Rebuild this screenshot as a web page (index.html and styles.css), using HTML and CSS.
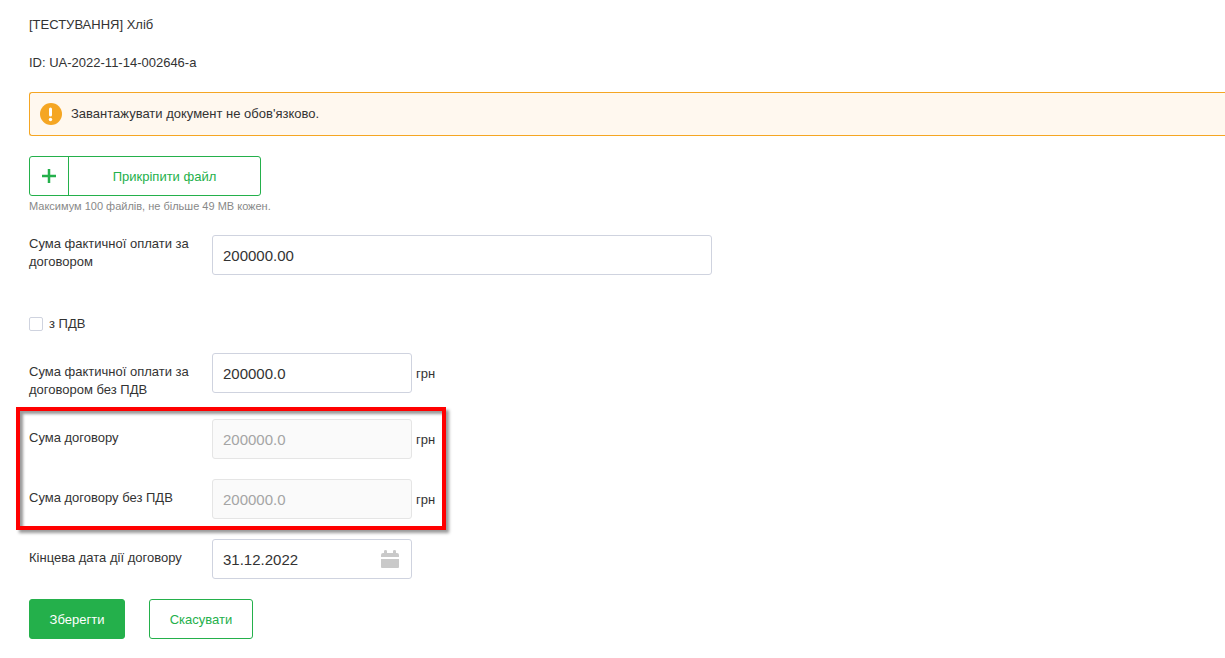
FILE: index.html
```html
<!DOCTYPE html>
<html lang="uk">
<head>
  <meta charset="UTF-8" />
  <meta name="viewport" content="width=device-width, initial-scale=1" />
  <title>[ТЕСТУВАННЯ] Хліб</title>
  <link rel="stylesheet" href="styles.css">
</head>
<body>
  <form class="contract">
    <p class="title">[ТЕСТУВАННЯ] Хліб</p>
    <p class="tender-id">ID: UA-2022-11-14-002646-a</p>

    <div class="alert">
      <svg class="alert-icon" viewBox="0 0 22 22" aria-hidden="true">
        <circle cx="11" cy="11" r="11" fill="#f5a623" />
        <path d="M10.500 6v6" stroke="#fff" stroke-width="3" stroke-linecap="round" />
        <circle cx="10.500" cy="16.500" r="1.700" fill="#fff" />
      </svg>
      <span>Завантажувати документ не обов'язково.</span>
    </div>

    <button type="button" class="attach">
      <span class="attach-plus">
        <svg viewBox="0 0 14 14" aria-hidden="true"><path d="M7 0v14M0 7h14" stroke="#24b04b" stroke-width="2.500" /></svg>
      </span>
      <span class="attach-text">Прикріпити файл</span>
    </button>
    <p class="hint">Максимум 100 файлів, не більше 49 MB кожен.</p>

    <div class="row row-paid">
      <label for="paid">Сума фактичної оплати за договором</label>
      <input type="text" id="paid" class="wide" value="200000.00" />
    </div>

    <div class="check">
      <input type="checkbox" id="vat" />
      <label for="vat">з ПДВ</label>
    </div>

    <div class="row">
      <label for="paid-novat">Сума фактичної оплати за договором без ПДВ</label>
      <input type="text" id="paid-novat" value="200000.0" />
      <span class="unit">грн</span>
    </div>

    <div class="marked">
      <div class="row">
        <label for="sum">Сума договору</label>
        <input type="text" id="sum" value="200000.0" disabled />
        <span class="unit">грн</span>
      </div>
      <div class="row">
        <label for="sum-novat">Сума договору без ПДВ</label>
        <input type="text" id="sum-novat" value="200000.0" disabled />
        <span class="unit">грн</span>
      </div>
    </div>

    <div class="row">
      <label for="end-date">Кінцева дата дії договору</label>
      <div class="date">
        <input type="text" id="end-date" value="31.12.2022" />
        <svg class="calendar" viewBox="0 0 18 18" fill="#c9c9c9" aria-hidden="true">
          <path d="M0 7V5q0-2 2-2h1V1q0-1 1.500-1T6 1v2h6V1q0-1 1.500-1T15 1v2h1q2 0 2 2v2z" />
          <path d="M0 9h18v8q0 1-1 1H1q-1 0-1-1z" />
        </svg>
      </div>
    </div>

    <div class="actions">
      <button type="submit" class="btn btn-save">Зберегти</button>
      <button type="button" class="btn btn-cancel">Скасувати</button>
    </div>
  </form>
</body>
</html>
```
FILE: styles.css
```css
*, *::after { box-sizing: border-box; }
body {
  margin: 0;
  font-family: "Liberation Sans", Arial, sans-serif;
  font-size: 13px;
  line-height: 18px;
  color: #333;
  background: #fff;
}
p { margin: 0; }
button, input { font-family: inherit; }
.contract { padding: 16px 0 19px 29px; }
.title, .tender-id { margin-bottom: 20px; }
.alert {
  display: flex;
  align-items: center;
  gap: 9px;
  height: 44px;
  margin-bottom: 20px;
  padding: 0 10px;
  background: #fff8ef;
  border: 1px solid #f5a623;
  border-right: none;
  border-radius: 3px 0 0 3px;
}
.alert-icon { width: 22px; height: 22px; }
.attach {
  display: flex;
  width: 232px;
  height: 40px;
  padding: 0;
  background: #fff;
  border: 1px solid #24b04b;
  border-radius: 3px;
  color: #24b04b;
  font-size: 13px;
  cursor: pointer;
}
.attach-plus {
  display: flex;
  align-items: center;
  justify-content: center;
  width: 39px;
  height: 100%;
  border-right: 1px solid #24b04b;
}
.attach-plus svg { width: 14px; height: 14px; }
.attach-text { flex: 1; align-self: center; }
.hint {
  margin-bottom: 18px;
  font-size: 11px;
  line-height: 21px;
  color: #888;
}
.row {
  display: flex;
  align-items: flex-start;
  margin-bottom: 20px;
}
.row label { width: 183px; padding-right: 10px; }
.row > label { padding-top: 10px; }
.row-paid { margin-bottom: 40px; }
.row-paid > label { padding-top: 0; }
input[type="text"] {
  width: 200px;
  height: 40px;
  padding: 0 10px;
  border: 1px solid #cfd3df;
  border-radius: 3px;
  background: #fff;
  color: #333;
  font-size: 15px;
}
input[type="text"].wide { width: 500px; }
input[type="text"]:disabled {
  background: #fafafa;
  border-color: #e5e5e5;
  color: #a5a5a5;
}
.unit { margin-left: 4px; padding-top: 12px; }
.check {
  display: flex;
  align-items: center;
  gap: 6px;
  margin-bottom: 20px;
}
.check input {
  appearance: none;
  width: 14px;
  height: 14px;
  margin: 0;
  border: 1px solid #cfd3df;
  border-radius: 2px;
  background: #fff;
}
.check input:checked { background: #24b04b; }
.marked { position: relative; }
/* red frame around the locked sums */
.marked::after {
  content: "";
  position: absolute;
  top: -12px;
  bottom: -11px;
  left: -13px;
  width: 430px;
  border: 4px solid #f00;
  box-shadow: 3px 3px 3px rgba(0, 0, 0, 0.4), inset 3px 3px 3px rgba(0, 0, 0, 0.4);
  pointer-events: none;
}
.date { position: relative; }
.calendar {
  position: absolute;
  top: 11px;
  right: 13px;
  width: 18px;
  height: 18px;
}
.actions { display: flex; gap: 24px; }
.btn {
  height: 40px;
  padding: 0;
  border: 1px solid #24b04b;
  border-radius: 3px;
  font-size: 13px;
  cursor: pointer;
}
.btn-save { width: 96px; background: #24b04b; color: #fff; }
.btn-cancel { width: 104px; background: #fff; color: #24b04b; }
```
